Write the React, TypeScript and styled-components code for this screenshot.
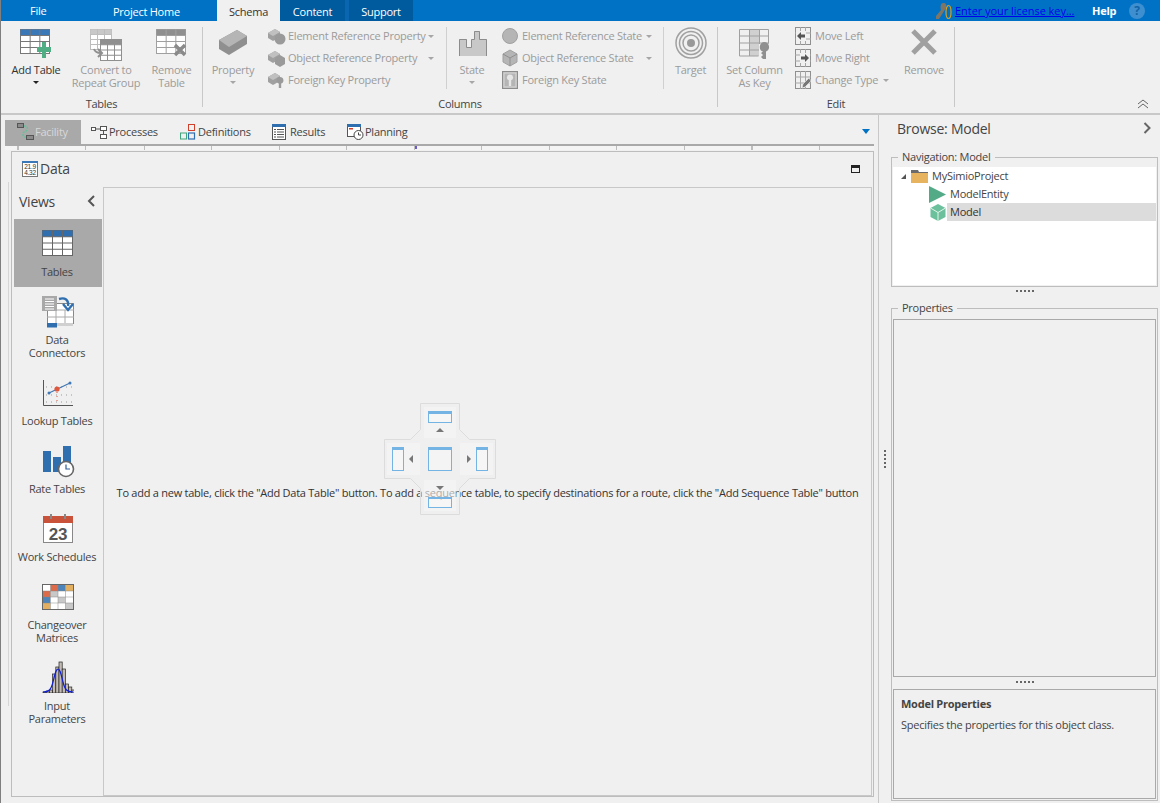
import React from "react";
import styled, { createGlobalStyle } from "styled-components";

const GlobalStyle = createGlobalStyle`
  html, body {
    margin: 0;
    padding: 0;
    background: #f0f0f0;
  }
  body {
    font-family: "Open Sans", "Noto Sans", "Liberation Sans", sans-serif;
    font-size: 11px;
    letter-spacing: -0.25px;
    color: #444;
    overflow: hidden;
  }
  * {
    box-sizing: border-box;
  }
`;

const GREY = "#a6a6a6";
const GREEN = "#4fae84";
const BLUE = "#2f6fb0";

// ---------- icons ----------

const GridIcon = ({ head, line, w = 31, h = 25, x = 0.5, y = 0.5, cols = 3, rows = 3 }: any) => {
  const hh = h / (rows + 1);
  return (
    <g>
      <rect x={x} y={y} width={w} height={h} fill="#fff" stroke={line} />
      <rect x={x} y={y} width={w} height={hh} fill={head} />
      {Array.from({ length: cols - 1 }).map((_, i) => (
        <line key={i} x1={x + (w / cols) * (i + 1)} x2={x + (w / cols) * (i + 1)} y1={y} y2={y + h} stroke={line} />
      ))}
      {Array.from({ length: rows }).map((_, i) => (
        <line key={i} x1={x} x2={x + w} y1={y + hh * (i + 1)} y2={y + hh * (i + 1)} stroke={line} />
      ))}
    </g>
  );
};

const AddTableIcon = () => (
  <svg width="32" height="30" viewBox="0 0 32 30">
    <GridIcon head="#3a78b8" line="#777" w={29} h={24} />
    <path d="M17 18h5v-5h4v5h5v5h-5v6h-4v-6h-5z" fill={GREEN} />
  </svg>
);

const ConvertIcon = () => (
  <svg width="32" height="32" viewBox="0 0 32 32">
    <GridIcon head="#c8c8c8" line="#bdbdbd" w={21} h={20} x={0.5} y={0.5} />
    <GridIcon head="#8f8f8f" line="#8f8f8f" w={21} h={21} x={10.5} y={10.5} />
    <path d="M4 20c1 3 3 4 7 4M8 20l4 4-4 4" fill="none" stroke="#8f8f8f" strokeWidth="2" />
  </svg>
);

const RemoveTableIcon = () => (
  <svg width="32" height="28" viewBox="0 0 32 28">
    <GridIcon head="#8f8f8f" line="#a0a0a0" w={29} h={24} />
    <path d="M19 16l10 10M29 16L19 26" stroke="#8a8a8a" strokeWidth="3.4" />
  </svg>
);

const PropertyIcon = () => (
  <svg width="30" height="28" viewBox="0 0 30 28">
    <path d="M1 11L19 1l10 6v8L11 26 1 20z" fill="#8f8f8f" />
    <path d="M1 11L19 1l10 6-18 11z" fill="#b5b5b5" />
  </svg>
);

const SmallBrick = ({ badge }: { badge: "circle" | "cube" | "key" }) => (
  <svg width="18" height="18" viewBox="0 0 18 18">
    <path d="M0 6l7-4 5 3v5l-7 4-5-3z" fill="#a0a0a0" />
    <path d="M0 6l7-4 5 3-7 4z" fill="#c0c0c0" />
    {badge === "circle" && <circle cx="12" cy="12" r="5.5" fill="#9a9a9a" />}
    {badge === "cube" && <path d="M12 6l5 3v6l-5 3-5-3V9z" fill="#9a9a9a" />}
    {badge === "key" && (
      <path d="M12 6a3.4 3.4 0 0 1 1.2 6.6V17h-2.4v-4.4A3.4 3.4 0 0 1 12 6z" fill="#9a9a9a" />
    )}
  </svg>
);

const StateIcon = () => (
  <svg width="30" height="28" viewBox="-2 -1 30 28">
    <path d="M0 26V9h8v8h4V9h3V1h6v8h7v17z" fill="#c8c8c8" />
    <path d="M.5 26V9.500h7v8h5v-8h3v-8h5v8h7V26" fill="none" stroke="#8c8c8c" />
  </svg>
);

const CircleSmall = () => (
  <svg width="16" height="16" viewBox="0 0 16 16">
    <circle cx="8" cy="8" r="7.5" fill="#b5b5b5" stroke="#a0a0a0" />
  </svg>
);

const CubeSmall = () => (
  <svg width="16" height="18" viewBox="0 0 16 18">
    <path d="M8 1l7 4v8l-7 4-7-4V5z" fill="#b5b5b5" stroke="#a0a0a0" />
    <path d="M1 5l7 4 7-4M8 9v8" fill="none" stroke="#8f8f8f" />
  </svg>
);

const KeyBox = () => (
  <svg width="16" height="18" viewBox="0 0 16 18">
    <rect x="0.5" y="0.5" width="15" height="17" fill="#b5b5b5" stroke="#8c8c8c" />
    <rect x="2" y="2" width="12" height="14" fill="none" stroke="#d8d8d8" />
    <path d="M8 3.500a3 3 0 0 1 1.200 5.800V15H6.800V9.300A3 3 0 0 1 8 3.500z" fill="#e6e6e6" />
  </svg>
);

const TargetIcon = () => (
  <svg width="32" height="32" viewBox="0 0 32 32">
    <g fill="none" stroke="#a0a0a0">
      <circle cx="16" cy="16" r="15" strokeWidth="1.5" />
      <circle cx="16" cy="16" r="11.5" strokeWidth="1.5" />
      <circle cx="16" cy="16" r="8" strokeWidth="1.5" />
    </g>
    <circle cx="16" cy="16" r="4" fill="#999" />
  </svg>
);

const SetKeyIcon = () => (
  <svg width="31" height="30" viewBox="0 0 31 30">
    <rect x="10" y="0" width="10" height="27" fill="#d0d0d0" />
    <path d="M.5.500h29v14M.5.500v26.500h19M10.500 0v27M20.500 0v15M0 7h30M0 14h30M0 21h20" fill="none" stroke="#a0a0a0" />
    <path d="M25 13a5 5 0 0 1 2 9.600V30h-3l-2-2 2-2-2-2 2-1.400A5 5 0 0 1 25 13z" fill="#8f8f8f" />
  </svg>
);

const MoveIcon = ({ kind }: { kind: "left" | "right" | "type" }) => (
  <svg width="16" height="18" viewBox="0 0 16 18">
    <rect x="0.5" y="0.5" width="15" height="17" fill="none" stroke="#8f8f8f" />
    <path d="M5.5 0v18M10.5 0v18M0 6h16M0 12h16" stroke="#a6a6a6" />
    {kind === "left" && <rect x="1" y="4" width="10" height="10" fill="#f0f0f0" />}
    {kind === "right" && <rect x="5" y="4" width="10" height="10" fill="#f0f0f0" />}
    {kind === "left" && <path d="M2 9l4-4v2.500h4v3H6V13z" fill="#555" />}
    {kind === "right" && <path d="M14 9l-4-4v2.500H6v3h4V13z" fill="#555" />}
    {kind === "type" && <path d="M7 17l1-4 6-6 2 3-6 6z" fill="#777" stroke="#f0f0f0" strokeWidth="0.600" />}
  </svg>
);

const BigX = () => (
  <svg width="26" height="26" viewBox="0 0 26 26">
    <path d="M2 2l22 22M24 2L2 24" stroke="#a0a0a0" strokeWidth="5" />
  </svg>
);

const FacilityIcon = () => (
  <svg width="17" height="17" viewBox="0 0 17 17">
    <rect x="0.500" y="0.500" width="6" height="4" fill="#8a8a8a" stroke="#555" />
    <rect x="9.500" y="12.500" width="7" height="4" fill="#8a8a8a" stroke="#555" />
    <path d="M7 3c3 0 4 2 3 4s-4 1-4 4 2 3 3 3" fill="none" stroke="#67c09a" strokeWidth="1.600" strokeDasharray="2 1" />
  </svg>
);

const ProcessesIcon = () => (
  <svg width="16" height="14" viewBox="0 0 16 14">
    <g fill="#fff" stroke="#555">
      <rect x="0.500" y="2.500" width="4" height="3" />
      <rect x="9.500" y="1.500" width="6" height="4" />
      <rect x="9.500" y="9.500" width="6" height="4" />
    </g>
    <path d="M4 4h6M12.500 5v5" stroke="#555" />
  </svg>
);

const DefinitionsIcon = () => (
  <svg width="16" height="16" viewBox="0 0 16 16">
    <rect x="8.500" y="0.500" width="6" height="6" fill="none" stroke="#d0402a" />
    <rect x="0.500" y="9" width="6" height="6" fill="none" stroke="#3fa57c" />
    <rect x="8.500" y="9" width="6" height="6" fill="none" stroke="#2f6fb0" strokeWidth="1.200" />
  </svg>
);

const ResultsIcon = () => (
  <svg width="14" height="16" viewBox="0 0 14 16">
    <rect x="0.500" y="0.500" width="13" height="15" fill="#fff" stroke="#555" />
    <rect x="0" y="0" width="14" height="3" fill="#2f6fb0" />
    <path d="M2 5.500h2M5 5.500h7M2 8h2M5 8h7M2 10.500h2M5 10.500h7M2 13h2M5 13h7" stroke="#555" />
  </svg>
);

const PlanningIcon = () => (
  <svg width="17" height="16" viewBox="0 0 17 16">
    <rect x="0.500" y="0.500" width="13" height="12" fill="#fff" stroke="#555" />
    <rect x="0" y="0" width="14" height="3" fill="#2f6fb0" />
    <rect x="2" y="4" width="4" height="1.500" fill="#d0402a" />
    <circle cx="11.500" cy="11" r="4.500" fill="#fff" stroke="#444" />
    <path d="M11.500 8.500V11h2.500" fill="none" stroke="#444" />
  </svg>
);

const DataIcon = () => (
  <svg width="16" height="16" viewBox="0 0 16 16">
    <rect x="0.500" y="0.500" width="15" height="15" fill="#fff" stroke="#777" />
    <rect x="0" y="0" width="16" height="2" fill="#3a78b8" />
    <text x="8" y="8" textAnchor="middle" fontSize="6.500" fill="#333" fontFamily="Liberation Sans">21.9</text>
    <text x="8" y="14" textAnchor="middle" fontSize="6.500" fill="#333" fontFamily="Liberation Sans">4.32</text>
  </svg>
);

const TablesIcon = () => (
  <svg width="32" height="32" viewBox="0 0 32 32">
    <g transform="translate(0.500 3.500)">
      <GridIcon head={BLUE} line="#666" w={30} h={25} x={0} y={0} />
    </g>
  </svg>
);

const ConnectorsIcon = () => (
  <svg width="32" height="32" viewBox="0 0 32 32" style={{ overflow: "visible" }}>
    <rect x="5.500" y="8.500" width="26" height="20" fill="#fff" stroke="#888" />
    <path d="M5 15h27M5 22h27M14 15v13M23 15v13" stroke="#aaa" />
    <rect x="5" y="28" width="10" height="4.500" fill={BLUE} />
    <rect x="15" y="28" width="16" height="3" fill="#d0d0d0" />
    <rect x="0" y="1" width="15" height="15" fill="#a8a8a8" />
    <path d="M3 4h9M3 6.500h9M3 9h9M3 11.500h9M3 14h9" stroke="#fff" />
    <path d="M17 4c6-2 10 1 9 7" fill="none" stroke={BLUE} strokeWidth="2.400" />
    <path d="M21 9l5 6 5-6" fill="none" stroke={BLUE} strokeWidth="2.400" />
  </svg>
);

const LookupIcon = () => (
  <svg width="32" height="32" viewBox="0 0 32 32">
    <path d="M1.500 4v25.500H31" fill="none" stroke="#555" />
    <path d="M4 11h27M4 19h27M4 26h27" stroke="#999" strokeDasharray="1 4" />
    <path d="M7 17L28 7" stroke="#3f78b4" strokeWidth="1.300" />
    <circle cx="7" cy="17" r="1.500" fill="#3f78b4" />
    <circle cx="28" cy="7" r="1.500" fill="#3f78b4" />
    <circle cx="15" cy="13" r="2.600" fill="#e0583c" />
    <path d="M15 16v12" stroke="#e0583c" strokeDasharray="1 3" />
  </svg>
);

const RateIcon = () => (
  <svg width="32" height="32" viewBox="0 0 32 32" style={{ overflow: "visible" }}>
    <rect x="1" y="7" width="8" height="21" fill={BLUE} />
    <rect x="11" y="13" width="8" height="15" fill={BLUE} />
    <rect x="21" y="2" width="8" height="22" fill={BLUE} />
    <circle cx="24" cy="25" r="7.500" fill="#fff" stroke="#666" strokeWidth="1.600" />
    <path d="M24 20.500V25h4" fill="none" stroke="#2f5f9a" strokeWidth="1.200" />
  </svg>
);

const ScheduleIcon = () => (
  <svg width="32" height="32" viewBox="0 0 32 32">
    <rect x="1.500" y="4.500" width="29" height="26" fill="#fff" stroke="#888" />
    <rect x="1" y="4" width="30" height="7" fill="#c8523a" />
    <rect x="8" y="2" width="2" height="5" fill="#888" />
    <rect x="22" y="2" width="2" height="5" fill="#888" />
    <text x="16" y="28" textAnchor="middle" fontSize="17" fontWeight="700" fill="#555" fontFamily="Liberation Sans">23</text>
  </svg>
);

const MATRIX = [
  ["#fff", "#dd6a48", "#4d84ba", "#e2b060"],
  ["#dd6a48", "#c8c8c8", "#fff", "#fff"],
  ["#4d84ba", "#fff", "#c8c8c8", "#fff"],
  ["#e2b060", "#fff", "#fff", "#c8c8c8"],
];

const MatrixIcon = () => (
  <svg width="32" height="32" viewBox="0 0 32 32">
    {MATRIX.map((row, r) =>
      row.map((c, i) => <rect key={`${r}-${i}`} x={1 + i * 7.5} y={5 + r * 6} width="7.500" height="6" fill={c} />)
    )}
    <path d="M8.500 5v24M16 5v24M23.500 5v24M1 11h30M1 17h30M1 23h30" stroke="#888" strokeWidth="0.500" />
    <rect x="0.500" y="4.500" width="31" height="25" fill="none" stroke="#666" />
  </svg>
);

const HISTOGRAM = [1, 2, 3, 19, 26, 31, 24, 9, 6, 3];

const HistogramIcon = () => (
  <svg width="32" height="32" viewBox="0 0 32 32">
    {HISTOGRAM.map((h, i) => (
      <rect key={i} x={1 + i * 3.200} y={32 - h} width="3.200" height={h} fill="#c4bcb4" stroke="#222" strokeWidth="0.700" />
    ))}
    <path d="M1 31c6 0 8-2 10-10 2-8 3-13 5-13s3 5 5 13c2 8 4 10 10 10" fill="none" stroke="#1020d8" strokeWidth="1.200" />
  </svg>
);

const LicenseKey = () => (
  <svg width="18" height="18" viewBox="0 0 18 18">
    <path d="M8 1c3 0 4 2 3 5L4 17H1v-3l5-6C5 4 6 1 8 1z" fill="#7d7566" />
    <ellipse cx="13.500" cy="10" rx="2.500" ry="6.500" fill="none" stroke="#d8a020" strokeWidth="1.200" />
  </svg>
);

const FolderIcon = () => (
  <svg width="17" height="13" viewBox="0 0 17 13">
    <path d="M0 0h7l1 2h9v1H0z" fill="#6b6b6b" />
    <rect x="0" y="3" width="17" height="10" fill="#e8b35f" />
  </svg>
);

const PlayIcon = () => (
  <svg width="17" height="17" viewBox="0 0 17 17">
    <path d="M0 0l17 8.500L0 17z" fill="#52ab86" />
  </svg>
);

const CubeIcon = () => (
  <svg width="16" height="17" viewBox="0 0 16 17">
    <path d="M8 0l7.500 4v9L8 17 .5 13V4z" fill="#6cc09c" />
    <path d="M.5 4L8 8.500 15.500 4M8 8.500V17" fill="none" stroke="#e4f4ec" />
  </svg>
);

const DockGuide = () => (
  <GuideSvg width="112" height="112" viewBox="0 0 112 112">
    <path
      d="M36.500.5h39v26l10 10h26v39h-26l-10 10v26h-39v-26l-10-10H.5v-39h26l10-10z"
      fill="#f0f0f0"
      fillOpacity="0.3"
      stroke="#dcdcdc"
    />
    <g fill="#f8f8f8" fillOpacity="0.45">
      <rect x="40" y="4" width="32" height="31" />
      <rect x="40" y="77" width="32" height="31" />
      <rect x="3" y="40" width="33" height="32" />
      <rect x="76" y="40" width="33" height="32" />
    </g>
    <g fill="#fff" fillOpacity="0.3" stroke="#73b4e4">
      <rect x="44.500" y="8.500" width="23" height="11" />
      <rect x="44.500" y="44.500" width="23" height="23" />
      <rect x="8.500" y="44.500" width="11" height="23" />
      <rect x="92.500" y="44.500" width="11" height="23" />
      <rect x="44.500" y="94.500" width="23" height="10" />
    </g>
    <g fill="#73b4e4">
      <rect x="44" y="8" width="24" height="3" />
      <rect x="44" y="44" width="24" height="3" />
      <rect x="8" y="44" width="12" height="3" />
      <rect x="92" y="44" width="12" height="3" />
      <rect x="44" y="94" width="24" height="2" />
    </g>
    <g fill="#777">
      <path d="M56 25l4 4h-8z" />
      <path d="M56 87l4-4h-8z" />
      <path d="M25 56l4-4v8z" />
      <path d="M87 56l-4-4v8z" />
    </g>
  </GuideSvg>
);

// ---------- page ----------

const Caret = ({ dark }: { dark?: boolean }) => <CaretMark $dark={dark} />;

const App: React.FC = () => {
  return (
    <>
      <GlobalStyle />
      <Page>
        <TitleBar>
          <TitleTab $w={77} $pad={30} $lh={21}>File</TitleTab>
          <TitleTab $w={140} $pad={36} $lh={24}>Project Home</TitleTab>
          <ActiveTab>Schema</ActiveTab>
          <ContextTab $w={65}>Content</ContextTab>
          <TabGap />
          <ContextTab $w={64}>Support</ContextTab>
          <TitleRight>
            <LicenseKey />
            <LicenseLink href="#">Enter your license key...</LicenseLink>
            <HelpLabel>Help</HelpLabel>
            <HelpDot>?</HelpDot>
          </TitleRight>
        </TitleBar>

        <Ribbon>
          <RibbonGroup $w={202}>
            <GroupBody>
              <LargeButton $w={70}>
                <LargeIcon><AddTableIcon /></LargeIcon>
                <LargeLabel>Add Table</LargeLabel>
                <Caret dark />
              </LargeButton>
              <LargeButton $w={70} $off>
                <LargeIcon><ConvertIcon /></LargeIcon>
                <LargeLabel>Convert to<br />Repeat Group</LargeLabel>
              </LargeButton>
              <LargeButton $w={61} $off>
                <LargeIcon><RemoveTableIcon /></LargeIcon>
                <LargeLabel>Remove<br />Table</LargeLabel>
              </LargeButton>
            </GroupBody>
            <GroupLabel>Tables</GroupLabel>
          </RibbonGroup>

          <RibbonGroup $w={515}>
            <GroupBody>
              <LargeButton $w={60} $off>
                <LargeIcon><PropertyIcon /></LargeIcon>
                <LargeLabel>Property</LargeLabel>
                <Caret />
              </LargeButton>
              <SmallStack $w={184} $sep>
                <SmallButton>
                  <SmallIcon><SmallBrick badge="circle" /></SmallIcon>
                  <SmallLabel $w={140}>Element Reference Property</SmallLabel>
                  <Caret />
                </SmallButton>
                <SmallButton>
                  <SmallIcon><SmallBrick badge="cube" /></SmallIcon>
                  <SmallLabel $w={140}>Object Reference Property</SmallLabel>
                  <Caret />
                </SmallButton>
                <SmallButton>
                  <SmallIcon><SmallBrick badge="key" /></SmallIcon>
                  <SmallLabel>Foreign Key Property</SmallLabel>
                </SmallButton>
              </SmallStack>
              <LargeButton $w={50} $off>
                <LargeIcon><StateIcon /></LargeIcon>
                <LargeLabel>State</LargeLabel>
                <Caret />
              </LargeButton>
              <SmallStack $w={167} $sep>
                <SmallButton>
                  <SmallIcon><CircleSmall /></SmallIcon>
                  <SmallLabel $w={124}>Element Reference State</SmallLabel>
                  <Caret />
                </SmallButton>
                <SmallButton>
                  <SmallIcon><CubeSmall /></SmallIcon>
                  <SmallLabel $w={124}>Object Reference State</SmallLabel>
                  <Caret />
                </SmallButton>
                <SmallButton>
                  <SmallIcon><KeyBox /></SmallIcon>
                  <SmallLabel>Foreign Key State</SmallLabel>
                </SmallButton>
              </SmallStack>
              <LargeButton $w={53} $off>
                <LargeIcon $top={0}><TargetIcon /></LargeIcon>
                <LargeLabel>Target</LargeLabel>
              </LargeButton>
            </GroupBody>
            <GroupLabel>Columns</GroupLabel>
          </RibbonGroup>

          <RibbonGroup $w={237}>
            <GroupBody>
              <LargeButton $w={73} $off>
                <LargeIcon><SetKeyIcon /></LargeIcon>
                <LargeLabel>Set Column<br />As Key</LargeLabel>
              </LargeButton>
              <SmallStack $w={109} $pad={4}>
                <SmallButton>
                  <SmallIcon><MoveIcon kind="left" /></SmallIcon>
                  <SmallLabel>Move Left</SmallLabel>
                </SmallButton>
                <SmallButton>
                  <SmallIcon><MoveIcon kind="right" /></SmallIcon>
                  <SmallLabel>Move Right</SmallLabel>
                </SmallButton>
                <SmallButton>
                  <SmallIcon><MoveIcon kind="type" /></SmallIcon>
                  <SmallLabel $w={68}>Change Type</SmallLabel>
                  <Caret />
                </SmallButton>
              </SmallStack>
              <LargeButton $w={48} $off>
                <LargeIcon><BigX /></LargeIcon>
                <LargeLabel>Remove</LargeLabel>
              </LargeButton>
            </GroupBody>
            <GroupLabel>Edit</GroupLabel>
          </RibbonGroup>

          <CollapseButton>
            <svg width="12" height="10" viewBox="0 0 12 10">
              <path d="M1 5l5-4 5 4M1 9l5-4 5 4" fill="none" stroke="#666" />
            </svg>
          </CollapseButton>
        </Ribbon>

        <Workspace>
          <LeftPane>
            <TabStrip>
              <ViewTab $active $w={76} $pad={12}><TabIcon><FacilityIcon /></TabIcon>Facility</ViewTab>
              <ViewTab $w={88} $pad={10}><TabIcon><ProcessesIcon /></TabIcon>Processes</ViewTab>
              <ViewTab $w={92} $pad={11}><TabIcon><DefinitionsIcon /></TabIcon>Definitions</ViewTab>
              <ViewTab $w={75} $pad={11}><TabIcon><ResultsIcon /></TabIcon>Results</ViewTab>
              <ViewTab $w={78} $pad={11}><TabIcon><PlanningIcon /></TabIcon>Planning</ViewTab>
              <TabMenu />
            </TabStrip>
            <Ruler>
              <RulerMark />
            </Ruler>
            <DataPanel>
              <DataHeader>
                <DataIcon />
                <DataTitle>Data</DataTitle>
                <RestoreBox />
              </DataHeader>
              <DataBody>
                <ViewsColumn>
                  <ViewsHeader>
                    <span>Views</span>
                    <svg width="8" height="12" viewBox="0 0 8 12">
                      <path d="M7 1L2 6l5 5" fill="none" stroke="#555" strokeWidth="2" />
                    </svg>
                  </ViewsHeader>
                  <ViewItem $active><ItemIcon><TablesIcon /></ItemIcon><span>Tables</span></ViewItem>
                  <ViewItem><ItemIcon><ConnectorsIcon /></ItemIcon><span>Data<br />Connectors</span></ViewItem>
                  <ViewItem><ItemIcon><LookupIcon /></ItemIcon><span>Lookup Tables</span></ViewItem>
                  <ViewItem><ItemIcon><RateIcon /></ItemIcon><span>Rate Tables</span></ViewItem>
                  <ViewItem><ItemIcon><ScheduleIcon /></ItemIcon><span>Work Schedules</span></ViewItem>
                  <ViewItem><ItemIcon><MatrixIcon /></ItemIcon><span>Changeover<br />Matrices</span></ViewItem>
                  <ViewItem><ItemIcon><HistogramIcon /></ItemIcon><span>Input<br />Parameters</span></ViewItem>
                </ViewsColumn>
                <ContentBox>
                  <EmptyMessage>
                    To add a new table, click the "Add Data Table" button. To add a sequence table, to specify destinations for a route, click the "Add Sequence Table" button
                  </EmptyMessage>
                  <DockGuide />
                </ContentBox>
              </DataBody>
            </DataPanel>
          </LeftPane>

          <VerticalSplitter>
            <Dots $vertical><i /><i /><i /><i /><i /></Dots>
          </VerticalSplitter>

          <RightPane>
            <BrowseHeader>
              <span>Browse: Model</span>
              <svg width="9" height="12" viewBox="0 0 9 12">
                <path d="M1.500 1l5 5-5 5" fill="none" stroke="#666" strokeWidth="2" />
              </svg>
            </BrowseHeader>

            <NavGroup>
              <Legend>Navigation: Model</Legend>
              <TreeBox>
                <TreeRow $indent={8}>
                  <TreeArrow />
                  <FolderIcon />
                  <TreeText>MySimioProject</TreeText>
                </TreeRow>
                <TreeRow $indent={36}>
                  <PlayIcon />
                  <TreeText>ModelEntity</TreeText>
                </TreeRow>
                <TreeRow $indent={37}>
                  <CubeIcon />
                  <TreeSelected>Model</TreeSelected>
                </TreeRow>
              </TreeBox>
            </NavGroup>

            <HorizontalSplitter $h={14} $top={3}>
              <Dots><i /><i /><i /><i /><i /></Dots>
            </HorizontalSplitter>

            <PropertiesGroup>
              <Legend>Properties</Legend>
              <PropertyGrid />
              <HorizontalSplitter $h={12} $top={4}>
                <Dots><i /><i /><i /><i /><i /></Dots>
              </HorizontalSplitter>
              <DescriptionBox>
                <DescriptionTitle>Model Properties</DescriptionTitle>
                <DescriptionText>Specifies the properties for this object class.</DescriptionText>
              </DescriptionBox>
            </PropertiesGroup>
          </RightPane>
        </Workspace>
      </Page>
    </>
  );
};

const Page = styled.div`
  width: 1160px;
  height: 803px;
  display: flex;
  flex-direction: column;
  background: #f0f0f0;
  border-left: 1px solid #7f7f7f;
  overflow: hidden;
`;

const TitleBar = styled.div`
  height: 21px;
  flex: none;
  margin-left: -1px;
  display: flex;
  align-items: stretch;
  background: #0072c6;
  color: #fff;
  font-size: 11px;
`;

const TitleTab = styled.div<{ $w: number; $pad: number; $lh: number }>`
  width: ${(p) => p.$w}px;
  padding-left: ${(p) => p.$pad}px;
  line-height: ${(p) => p.$lh}px;
`;

const ActiveTab = styled.div`
  width: 63px;
  text-align: center;
  background: #f0f0f0;
  color: #333;
  line-height: 24px;
`;

const ContextTab = styled.div<{ $w: number }>`
  width: ${(p) => p.$w}px;
  text-align: center;
  background: #005a9e;
  line-height: 24px;
`;

const TabGap = styled.div`
  width: 4px;
  background: #0a66b0;
`;

const TitleRight = styled.div`
  margin-left: auto;
  display: flex;
  align-items: center;
  padding-right: 15px;
`;

const LicenseLink = styled.a`
  color: #0000ee;
  margin-left: 2px;
  letter-spacing: -0.05px;
  text-decoration: underline;
  width: 120px;
  white-space: nowrap;
`;

const HelpLabel = styled.span`
  margin-left: 17px;
  width: 37px;
  font-weight: 700;
`;

const HelpDot = styled.span`
  width: 16px;
  height: 16px;
  border-radius: 50%;
  background: #3d8fd0;
  color: #0f63a8;
  font-weight: 700;
  font-size: 12px;
  line-height: 16px;
  text-align: center;
`;

const Ribbon = styled.div`
  height: 92px;
  flex: none;
  display: flex;
  position: relative;
  padding-top: 6px;
`;

const RibbonGroup = styled.div<{ $w: number }>`
  width: ${(p) => p.$w}px;
  height: 80px;
  flex: none;
  display: flex;
  flex-direction: column;
  border-right: 1px solid #c8c8c8;
`;

const GroupBody = styled.div`
  display: flex;
  flex: 1;
  min-height: 0;
`;

const GroupLabel = styled.div`
  height: 16px;
  line-height: 25px;
  text-align: center;
  color: #444;
`;

const LargeButton = styled.div<{ $w: number; $off?: boolean }>`
  width: ${(p) => p.$w}px;
  flex: none;
  display: flex;
  flex-direction: column;
  align-items: center;
  color: ${(p) => (p.$off ? "#9b9b9b" : "#333")};
  line-height: 13px;
  white-space: nowrap;
`;

const LargeIcon = styled.div<{ $top?: number }>`
  height: 36px;
  padding-top: ${(p) => p.$top ?? 2}px;
  display: flex;
  align-items: flex-start;
  justify-content: center;
`;

const LargeLabel = styled.div`
  text-align: center;
`;

const CaretMark = styled.span<{ $dark?: boolean }>`
  display: inline-block;
  margin-top: 5px;
  width: 0;
  height: 0;
  flex: none;
  border-left: 3px solid transparent;
  border-right: 3px solid transparent;
  border-top: 3px solid ${(p) => (p.$dark ? "#222" : GREY)};
`;

const SmallStack = styled.div<{ $w: number; $sep?: boolean; $pad?: number }>`
  width: ${(p) => p.$w}px;
  height: 62px;
  flex: none;
  display: flex;
  flex-direction: column;
  gap: 4px;
  padding-left: ${(p) => p.$pad ?? 5}px;
  border-right: ${(p) => (p.$sep ? "1px solid #d0d0d0" : "none")};
`;

const SmallButton = styled.div`
  display: flex;
  align-items: center;
  height: 18px;
  color: #9b9b9b;
  white-space: nowrap;

  ${CaretMark} {
    margin-top: 0;
  }
`;

const SmallIcon = styled.div`
  width: 20px;
  height: 18px;
  flex: none;
  display: flex;
  align-items: center;
`;

const SmallLabel = styled.span<{ $w?: number }>`
  padding-bottom: 2px;
  ${(p) => (p.$w ? `width: ${p.$w}px;` : "")}
`;

const CollapseButton = styled.div`
  position: absolute;
  right: 11px;
  top: 76px;
`;

const Workspace = styled.div`
  flex: 1;
  min-height: 0;
  display: flex;
  border-top: 2px solid #c8c8c8;
`;

const LeftPane = styled.div`
  width: 878px;
  flex: none;
  display: flex;
  flex-direction: column;
  padding: 5px 4px 0 4px;
  border-right: 1px solid #c8c8c8;
`;

const TabStrip = styled.div`
  height: 24px;
  flex: none;
  display: flex;
  position: relative;
`;

const ViewTab = styled.div<{ $active?: boolean; $w: number; $pad: number }>`
  width: ${(p) => p.$w}px;
  padding: 0 0 1px ${(p) => p.$pad}px;
  display: flex;
  align-items: center;
  background: ${(p) => (p.$active ? "#a9a9a9" : "transparent")};
  color: ${(p) => (p.$active ? "#d8d8d8" : "#444")};
`;

const TabIcon = styled.span`
  width: 18px;
  flex: none;
  display: flex;
  align-items: center;
`;

const TabMenu = styled.span`
  position: absolute;
  right: 4px;
  top: 9px;
  width: 0;
  height: 0;
  border-left: 4px solid transparent;
  border-right: 4px solid transparent;
  border-top: 5px solid #0072c6;
`;

const Ruler = styled.div`
  height: 6px;
  flex: none;
  position: relative;
  border-top: 2px solid #a9a9a9;
  background-color: #f4f4f4;
  background-image: repeating-linear-gradient(
    to right,
    #bdbdbd 0,
    #bdbdbd 1px,
    transparent 1px,
    transparent 67.5px
  );
  background-position: 139px 0;
`;

const RulerMark = styled.span`
  position: absolute;
  left: 410px;
  top: 0;
  width: 2px;
  height: 3px;
  background: #6a5acd;
`;

const DataPanel = styled.div`
  flex: 1;
  min-height: 0;
  margin: 1px 0 6px 6px;
  border: 1px solid #bdbdbd;
  display: flex;
  flex-direction: column;
  position: relative;

  &::before {
    content: "";
    position: absolute;
    left: -4px;
    top: 30px;
    bottom: 90px;
    width: 1px;
    background: #d6d6d6;
  }
`;

const DataHeader = styled.div`
  height: 35px;
  flex: none;
  display: flex;
  align-items: center;
  padding: 0 13px 2px 10px;
  gap: 2px;
`;

const DataTitle = styled.span`
  font-size: 14px;
  color: #444;
`;

const RestoreBox = styled.span`
  margin-left: auto;
  width: 9px;
  height: 8px;
  border: 1px solid #222;
  border-top-width: 3px;
`;

const DataBody = styled.div`
  flex: 1;
  min-height: 0;
  display: flex;
  padding: 0 1px 0 2px;
`;

const ViewsColumn = styled.div`
  width: 88px;
  flex: none;
  display: flex;
  flex-direction: column;
`;

const ViewsHeader = styled.div`
  height: 32px;
  flex: none;
  display: flex;
  align-items: center;
  justify-content: space-between;
  padding: 0 7px 4px 5px;
  font-size: 14px;
  color: #444;
`;

const ViewItem = styled.div<{ $active?: boolean }>`
  display: flex;
  flex-direction: column;
  align-items: center;
  padding: 8px 0 9px;
  text-align: center;
  line-height: 13px;
  background: ${(p) => (p.$active ? "#a9a9a9" : "transparent")};
  color: #444;
  white-space: nowrap;

  span {
    margin-right: 2px;
  }
`;

const ItemIcon = styled.div`
  width: 32px;
  height: 32px;
  margin-bottom: 6px;
`;

const ContentBox = styled.div`
  flex: 1;
  min-width: 0;
  margin-left: 1px;
  border: 1px solid #c8c8c8;
  position: relative;
  display: flex;
  align-items: center;
  justify-content: center;
`;

const EmptyMessage = styled.div`
  white-space: nowrap;
  color: #333;
  position: relative;
  top: 1px;
`;

const GuideSvg = styled.svg`
  position: absolute;
  left: 280px;
  top: 215px;
`;

const VerticalSplitter = styled.div`
  width: 11px;
  flex: none;
  display: flex;
  align-items: center;
  justify-content: center;
`;

const Dots = styled.div<{ $vertical?: boolean }>`
  display: flex;
  flex-direction: ${(p) => (p.$vertical ? "column" : "row")};
  gap: 2px;

  i {
    width: 2px;
    height: 2px;
    background: #666;
    display: block;
  }
`;

const RightPane = styled.div`
  flex: 1;
  min-width: 0;
  display: flex;
  flex-direction: column;
  padding: 0 2px 2px 1px;
`;

const BrowseHeader = styled.div`
  height: 28px;
  flex: none;
  padding: 0 6px 2px 6px;
  display: flex;
  align-items: center;
  justify-content: space-between;
  font-size: 14px;
  color: #444;
`;

const NavGroup = styled.fieldset`
  height: 137px;
  flex: none;
  margin: 7px 0 0;
  padding: 0 1px 1px;
  border: 1px solid #bdbdbd;
  min-width: 0;
`;

const Legend = styled.legend`
  margin-left: 5px;
  padding: 0 4px;
  line-height: 14px;
  color: #444;
`;

const TreeBox = styled.div`
  height: 118px;
  margin-top: 3px;
  background: #fff;
`;

const TreeRow = styled.div<{ $indent: number }>`
  height: 18px;
  display: flex;
  align-items: center;
  padding-left: ${(p) => p.$indent}px;
  color: #444;
`;

const TreeArrow = styled.span`
  width: 0;
  height: 0;
  margin-right: 5px;
  border-left: 5px solid transparent;
  border-bottom: 5px solid #555;
`;

const TreeText = styled.span`
  margin-left: 4px;
  padding-bottom: 2px;
`;

const TreeSelected = styled.span`
  flex: 1;
  height: 18px;
  margin-left: 1px;
  padding-left: 3px;
  line-height: 18px;
  background: #dcdcdc;
  color: #333;
`;

const HorizontalSplitter = styled.div<{ $h: number; $top: number }>`
  height: ${(p) => p.$h}px;
  padding-top: ${(p) => p.$top}px;
  flex: none;
  display: flex;
  align-items: flex-start;
  justify-content: center;
`;

const PropertiesGroup = styled.fieldset`
  flex: 1;
  min-height: 0;
  min-width: 0;
  margin: 0;
  padding: 4px 1px 1px;
  border: 1px solid #bdbdbd;
  display: flex;
  flex-direction: column;
`;

const PropertyGrid = styled.div`
  height: 358px;
  flex: none;
  border: 1px solid #a9a9a9;
`;

const DescriptionBox = styled.div`
  flex: 1;
  min-height: 0;
  border: 1px solid #a9a9a9;
  padding: 7px 7px;
`;

const DescriptionTitle = styled.div`
  font-weight: 700;
  color: #444;
  line-height: 14px;
`;

const DescriptionText = styled.div`
  margin-top: 7px;
  color: #444;
  line-height: 14px;
`;

export default App;
